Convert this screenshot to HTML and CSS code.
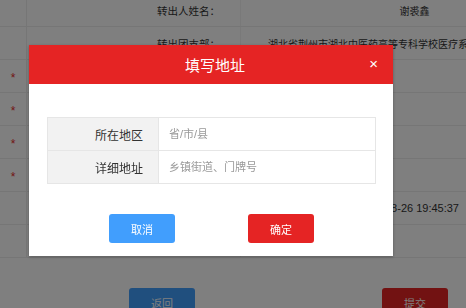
FILE: index.html
```html
<!DOCTYPE html>
<html lang="zh-CN">
<head>
    <meta charset="UTF-8">
    <meta name="viewport" content="width=device-width, initial-scale=1.0">
    <title>填写地址</title>
    <link rel="stylesheet" href="styles.css">
</head>
<body>

<div class="page">
    <div class="row">
        <div class="mark"></div>
        <div class="label">转出人姓名：</div>
        <div class="value">谢裘鑫</div>
    </div>
    <div class="row">
        <div class="mark"></div>
        <div class="label">转出团支部：</div>
        <div class="value value-long">湖北省荆州市湖北中医药高等专科学校医疗系团总支</div>
    </div>
    <div class="row">
        <div class="mark">*</div>
        <div class="label">转入团支部：</div>
        <div class="value"></div>
    </div>
    <div class="row">
        <div class="mark">*</div>
        <div class="label">转接原因：</div>
        <div class="value"></div>
    </div>
    <div class="row">
        <div class="mark">*</div>
        <div class="label">联系电话：</div>
        <div class="value"></div>
    </div>
    <div class="row">
        <div class="mark">*</div>
        <div class="label">联系地址：</div>
        <div class="value"></div>
    </div>
    <div class="row">
        <div class="mark"></div>
        <div class="label">申请时间：</div>
        <div class="value value-time">2019-08-26 19:45:37</div>
    </div>
    <div class="row">
        <div class="mark"></div>
        <div class="label"></div>
        <div class="value"></div>
    </div>

    <div class="actions">
        <button class="btn btn-back">返回</button>
        <button class="btn btn-submit">提交</button>
    </div>
</div>

<div class="mask">
    <div class="dialog">
        <div class="dialog-head">
            <span class="dialog-title">填写地址</span>
            <span class="dialog-close">×</span>
        </div>
        <div class="dialog-body">
            <table class="form-table">
                <tr>
                    <th>所在地区</th>
                    <td><input type="text" placeholder="省/市/县"></td>
                </tr>
                <tr>
                    <th>详细地址</th>
                    <td><input type="text" placeholder="乡镇街道、门牌号"></td>
                </tr>
            </table>
            <div class="dialog-btns">
                <button class="btn btn-cancel">取消</button>
                <button class="btn btn-ok">确定</button>
            </div>
        </div>
    </div>
</div>

</body>
</html>
```

FILE: styles.css
```css
* {
    box-sizing: border-box;
}

body {
    margin: 0;
    font-family: "Liberation Sans", "Noto Sans CJK SC", sans-serif;
    font-size: 10px;
    color: #333;
    background: #fff;
    overflow: hidden;
}

.page {
    margin-top: -6px;
    width: 466px;
    overflow: hidden;
}

.row {
    display: flex;
    width: 588px;
    height: 33px;
    border-bottom: 1px solid #ececec;
}

.mark {
    width: 27px;
    flex-shrink: 0;
    border-right: 1px solid #ececec;
    color: #e52a2a;
    font-size: 12px;
    display: flex;
    align-items: center;
    justify-content: center;
    padding-top: 3px;
}

.label {
    width: 213px;
    flex-shrink: 0;
    display: flex;
    align-items: center;
    justify-content: flex-end;
    padding-right: 20px;
    font-size: 10.5px;
}

.value {
    width: 348px;
    flex-shrink: 0;
    display: flex;
    align-items: center;
    justify-content: center;
    white-space: nowrap;
    border-left: 1px solid #f2f2f2;
}

.value-long {
    justify-content: flex-start;
    padding-left: 27px;
}

.value-time {
    justify-content: flex-end;
    padding-right: 129px;
    font-size: 11px;
}

.actions {
    display: flex;
    justify-content: space-between;
    padding: 30px 18px 0 129px;
}

.btn {
    width: 66px;
    height: 29px;
    border: none;
    border-radius: 3px;
    color: #fff;
    font-family: inherit;
    font-size: 11px;
    cursor: pointer;
}

.btn-back, .btn-cancel {
    background-color: #419efd;
}

.btn-submit, .btn-ok {
    background-color: #e52424;
}

.mask {
    position: fixed;
    top: 0;
    left: 0;
    right: 0;
    bottom: 0;
    background: rgba(0, 0, 0, 0.5);
    padding: 45px 0 0 29px;
}

.dialog {
    width: 364px;
    height: 211px;
    background: #fff;
    box-shadow: 0 1px 3px rgba(0, 0, 0, 0.3);
}

.dialog-head {
    height: 39px;
    background: #e52424;
    color: #fff;
    display: flex;
    align-items: center;
    justify-content: center;
    padding-left: 8px;
    position: relative;
}

.dialog-title {
    font-size: 15px;
}

.dialog-close {
    position: absolute;
    right: 15px;
    top: 11px;
    font-size: 15px;
    line-height: 16px;
}

.dialog-body {
    padding: 33px 17px 0 18px;
}

.form-table {
    width: 329px;
    border-collapse: collapse;
}

.form-table th, .form-table td {
    border: 1px solid #e6e6e6;
    height: 33px;
    padding: 0;
}

.form-table th {
    width: 111px;
    background-color: #f2f2f2;
    text-align: right;
    padding-right: 15px;
    font-weight: normal;
    font-size: 12px;
    color: #333;
}

.form-table input {
    width: 100%;
    border: none;
    outline: none;
    padding: 0 10px;
    font-family: inherit;
    font-size: 11px;
    color: #333;
    background: transparent;
}

.form-table input::placeholder {
    color: #999;
}

.dialog-btns {
    display: flex;
    padding: 30px 0 0 62px;
    gap: 73px;
}
```
